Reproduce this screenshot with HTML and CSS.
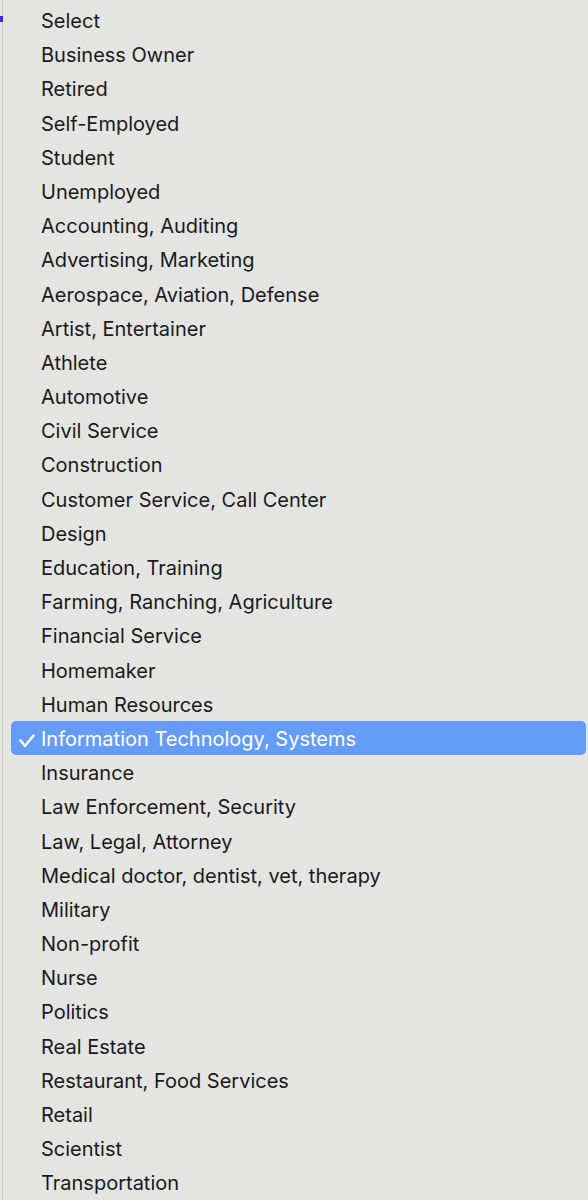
FILE: index.html
```html
<!DOCTYPE html>
<html>
<head>
<meta charset="utf-8">
<link rel="stylesheet" href="styles.css">
</head>
<body>
<div class="page">
  <span class="mark"></span>
  <div class="menu">
    <ul class="list">
      <li class="item">Select</li>
      <li class="item">Business Owner</li>
      <li class="item">Retired</li>
      <li class="item">Self-Employed</li>
      <li class="item">Student</li>
      <li class="item">Unemployed</li>
      <li class="item">Accounting, Auditing</li>
      <li class="item">Advertising, Marketing</li>
      <li class="item">Aerospace, Aviation, Defense</li>
      <li class="item">Artist, Entertainer</li>
      <li class="item">Athlete</li>
      <li class="item">Automotive</li>
      <li class="item">Civil Service</li>
      <li class="item">Construction</li>
      <li class="item">Customer Service, Call Center</li>
      <li class="item">Design</li>
      <li class="item">Education, Training</li>
      <li class="item">Farming, Ranching, Agriculture</li>
      <li class="item">Financial Service</li>
      <li class="item">Homemaker</li>
      <li class="item">Human Resources</li>
      <li class="item selected"><svg class="check" width="16" height="14" viewBox="0 0 16 14"><polyline points="1.5,6.5 6,12 14.5,1.5" fill="none" stroke="#ffffff" stroke-width="2.4" stroke-linecap="round" stroke-linejoin="round"/></svg>Information Technology, Systems</li>
      <li class="item">Insurance</li>
      <li class="item">Law Enforcement, Security</li>
      <li class="item">Law, Legal, Attorney</li>
      <li class="item">Medical doctor, dentist, vet, therapy</li>
      <li class="item">Military</li>
      <li class="item">Non-profit</li>
      <li class="item">Nurse</li>
      <li class="item">Politics</li>
      <li class="item">Real Estate</li>
      <li class="item">Restaurant, Food Services</li>
      <li class="item">Retail</li>
      <li class="item">Scientist</li>
      <li class="item">Transportation</li>
    </ul>
  </div>
</div>
</body>
</html>
```
FILE: styles.css
```css
html, body {
  margin: 0;
  padding: 0;
  background: #e4e4e2;
}
.page {
  position: relative;
  width: 588px;
  height: 1200px;
  overflow: hidden;
}
.menu {
  height: 1200px;
  background: #e4e4e2;
  border-left: 1px solid #c8c8c6;
  margin-left: 2px;
  overflow: hidden;
}
.mark {
  position: absolute;
  left: 0;
  top: 16px;
  width: 3px;
  height: 6px;
  background: #4b2bd0;
  z-index: 2;
}
.list {
  list-style: none;
  margin: 0;
  padding: 3px 0 0 8px;
  font-family: Inter, "Liberation Sans", sans-serif;
  font-size: 20px;
  color: #1a1a1a;
}
.item {
  position: relative;
  box-sizing: border-box;
  height: 34.2px;
  padding-top: 3px;
  line-height: 31.2px;
  padding-left: 30px;
  margin-right: 2px;
  border-radius: 5px;
  white-space: nowrap;
}
.selected {
  background: #659cf8;
  color: #ffffff;
}
.check {
  position: absolute;
  left: 8px;
  top: 13px;
}
```
